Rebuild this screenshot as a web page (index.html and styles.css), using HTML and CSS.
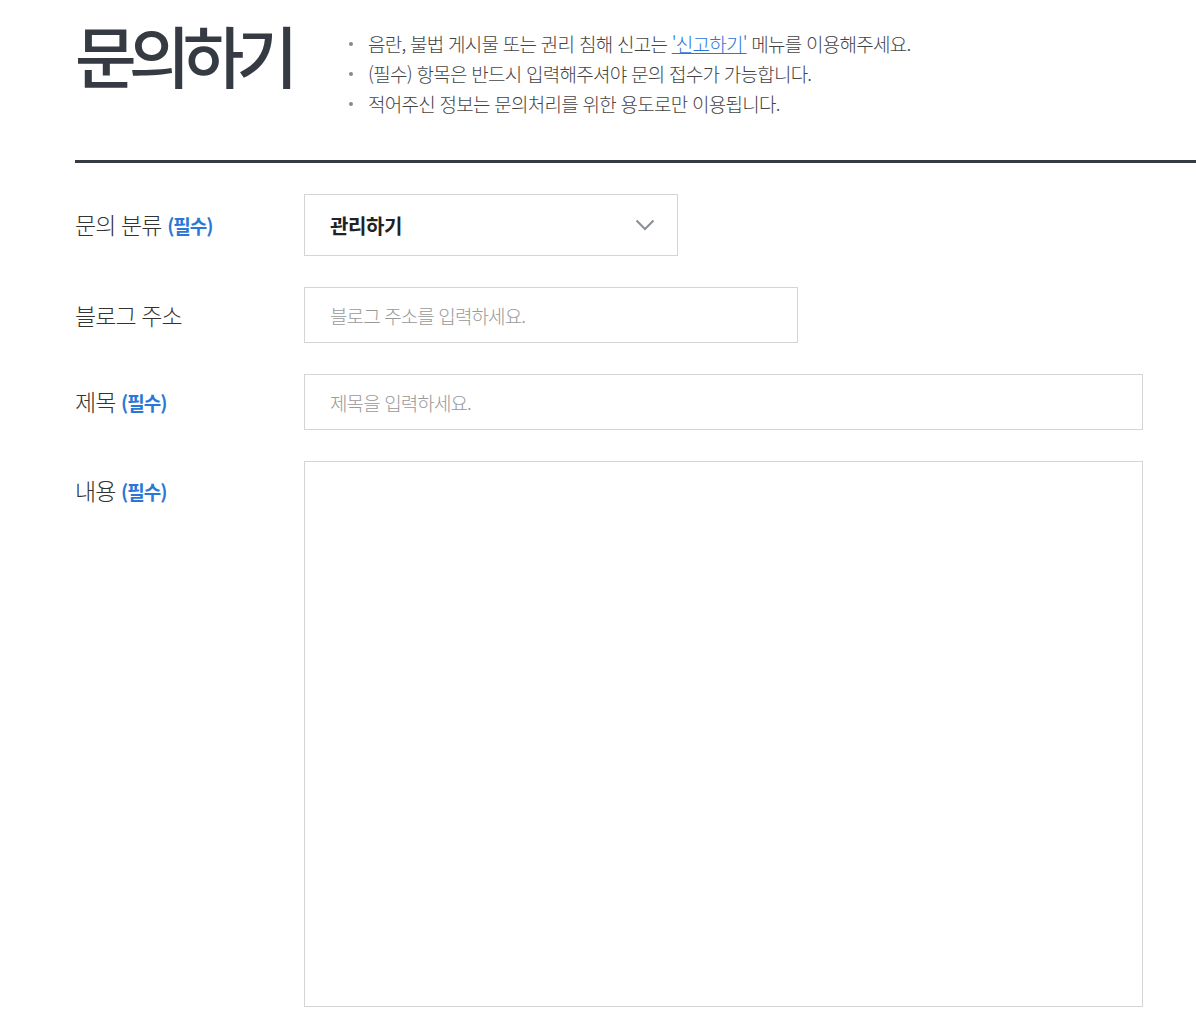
FILE: index.html
```html
<!DOCTYPE html>
<html lang="ko">
<head>
<meta charset="utf-8">
<title>문의하기</title>
<link rel="stylesheet" href="styles.css">
</head>
<body>
<div class="page">
  <header class="head">
    <h1 class="title">문의하기</h1>
    <ul class="notice">
      <li>음란, 불법 게시물 또는 권리 침해 신고는 <a href="#" class="link">'신고하기'</a> 메뉴를 이용해주세요.</li>
      <li>(필수) 항목은 반드시 입력해주셔야 문의 접수가 가능합니다.</li>
      <li>적어주신 정보는 문의처리를 위한 용도로만 이용됩니다.</li>
    </ul>
  </header>
  <div class="rule"></div>
  <form class="form">
    <div class="row">
      <div class="label">문의 분류 <span class="req">(필수)</span></div>
      <div class="select">
        <span class="select-text">관리하기</span>
        <svg class="chev" width="20" height="12" viewBox="0 0 20 12"><path d="M1.5 1.5 L10 10 L18.5 1.5" fill="none" stroke="#8a8f96" stroke-width="2"/></svg>
      </div>
    </div>
    <div class="row">
      <div class="label">블로그 주소</div>
      <input class="input input-blog" type="text" placeholder="블로그 주소를 입력하세요.">
    </div>
    <div class="row">
      <div class="label">제목 <span class="req">(필수)</span></div>
      <input class="input input-wide" type="text" placeholder="제목을 입력하세요.">
    </div>
    <div class="row row-top">
      <div class="label label-top">내용 <span class="req">(필수)</span></div>
      <textarea class="textarea"></textarea>
    </div>
  </form>
</div>
</body>
</html>
```
FILE: styles.css
```css
html, body {
  margin: 0;
  padding: 0;
  background: #fff;
}
body {
  font-family: "Noto Sans CJK KR", "Noto Sans", sans-serif;
  color: #333;
  overflow: hidden;
}
.page {
  padding-left: 75px;
}
.head {
  display: flex;
  align-items: flex-start;
  height: 160px;
}
.title {
  margin: 0;
  padding-top: 10px;
  font-size: 67px;
  line-height: 88px;
  font-weight: 500;
  color: #363a43;
  letter-spacing: -7.8px;
  width: 273px;
}
.notice {
  list-style: none;
  margin: 0;
  padding: 29px 0 0 0;
}
.notice li {
  position: relative;
  padding-left: 20px;
  font-size: 19px;
  line-height: 30px;
  font-weight: 300;
  color: #444;
  letter-spacing: -0.75px;
}
.notice li::before {
  content: "";
  position: absolute;
  left: 1px;
  top: 13px;
  width: 4px;
  height: 4px;
  background: #888;
  border-radius: 50%;
}
.link {
  color: #2a78d6;
  text-decoration: underline;
}
.rule {
  height: 3px;
  background: #363a43;
  margin-top: 0;
}
.form {
  padding-top: 31px;
}
.row {
  display: flex;
  align-items: center;
  margin-bottom: 31px;
}
.row-top {
  align-items: flex-start;
}
.label {
  width: 229px;
  flex: none;
  font-size: 23px;
  line-height: 30px;
  font-weight: 300;
  color: #333;
  letter-spacing: -0.9px;
}
.label-top {
  padding-top: 14px;
}
.req {
  font-size: 19px;
  font-weight: 700;
  color: #2a78d6;
  letter-spacing: -1px;
}
.select {
  box-sizing: border-box;
  width: 374px;
  height: 62px;
  border: 1px solid #d5d5d5;
  display: flex;
  align-items: center;
  justify-content: space-between;
  padding: 0 22px 0 25px;
}
.select-text {
  font-size: 20px;
  font-weight: 700;
  color: #222;
  letter-spacing: -0.4px;
}
.chev {
  display: block;
}
.input {
  box-sizing: border-box;
  height: 56px;
  border: 1px solid #d5d5d5;
  padding: 0 25px;
  font-family: inherit;
  font-size: 19px;
  font-weight: 300;
  letter-spacing: -0.9px;
  color: #333;
  outline: none;
}
.input::placeholder {
  color: #999;
}
.input-blog {
  width: 494px;
}
.input-wide {
  width: 839px;
}
.textarea {
  box-sizing: border-box;
  width: 839px;
  height: 546px;
  border: 1px solid #d5d5d5;
  resize: none;
  margin: 0;
  outline: none;
  display: block;
}
```
